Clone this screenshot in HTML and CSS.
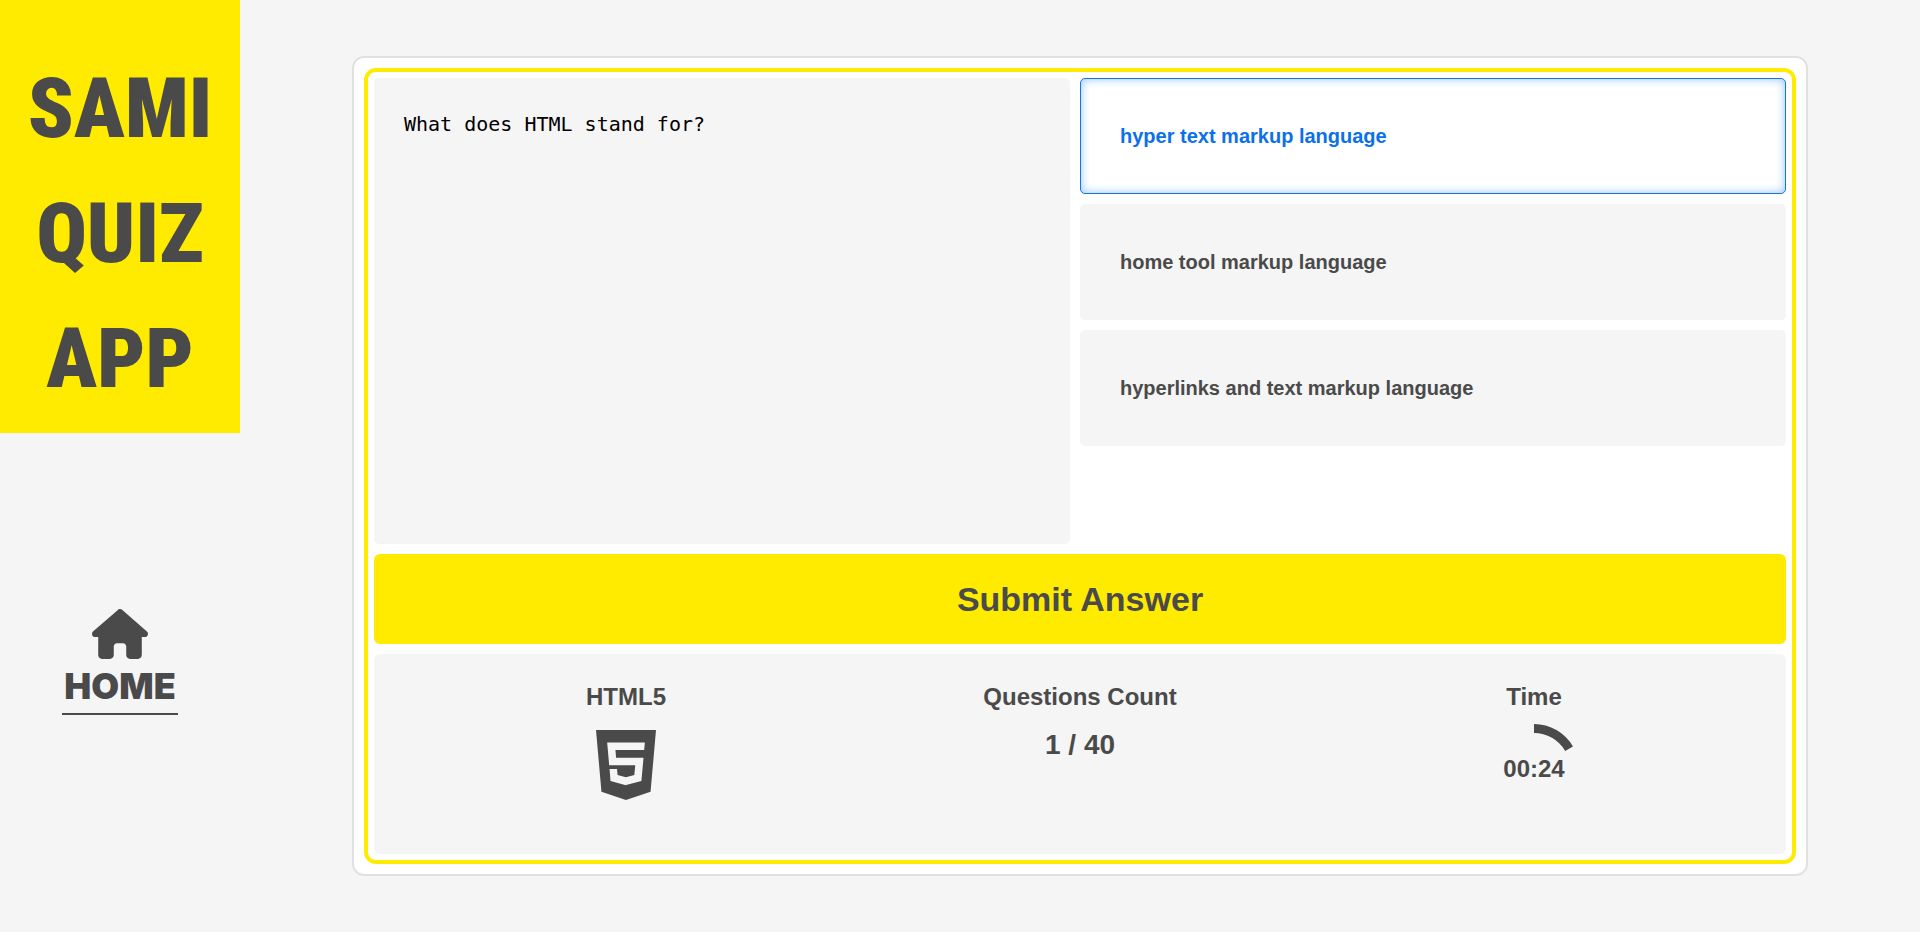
FILE: index.html
```
<!DOCTYPE html>
<html lang="en">
<head>
<meta charset="utf-8">
<title>Sami Quiz App</title>
<meta name="viewport" content="width=device-width, initial-scale=1">
<link rel="stylesheet" href="styles.css">
</head>
<body>
<div class="app">
  <aside class="sidebar">
    <h1 class="brand"><span>SAMI</span><span>QUIZ</span><span>APP</span></h1>
    <nav class="nav">
      <a class="home" href="#">
        <svg class="home-icon" viewBox="0 0 576 512" aria-hidden="true"><path d="M575.8 255.5c0 18-15 32.1-32 32.1h-32l.7 160.2c0 2.7-.2 5.4-.5 8.1V472c0 22.1-17.9 40-40 40H456c-1.1 0-2.2 0-3.3-.1c-1.4 .1-2.8 .1-4.2 .1H416 392c-22.1 0-40-17.9-40-40V448 384c0-17.7-14.3-32-32-32H256c-17.7 0-32 14.3-32 32v64 24c0 22.1-17.9 40-40 40H160 128.1c-1.5 0-3-.1-4.5-.2c-1.2 .1-2.4 .2-3.6 .2H104c-22.1 0-40-17.9-40-40V360c0-.9 0-1.9 .1-2.8V287.6H32c-18 0-32-14-32-32.1c0-9 3-17 10-24L266.4 8c7-7 15-8 22-8s15 2 21 7L564.8 231.5c8 7 12 15 11 24z"/></svg>
        <span class="home-label">HOME</span>
      </a>
    </nav>
  </aside>
  <main class="main">
    <div class="card">
      <form class="quiz">
        <pre class="question" id="question">What does HTML stand for?</pre>
        <div class="options" role="radiogroup" aria-labelledby="question">
          <label class="option"><input class="option-input" type="radio" name="answer" checked>hyper text markup language</label>
          <label class="option"><input class="option-input" type="radio" name="answer">home tool markup language</label>
          <label class="option"><input class="option-input" type="radio" name="answer">hyperlinks and text markup language</label>
        </div>
        <button class="submit" type="submit">Submit Answer</button>
        <div class="stats">
          <section class="stat">
            <h2 class="stat-title">HTML5</h2>
            <svg class="html-icon" viewBox="0 32 384 448" aria-hidden="true"><path d="M0 32l34.900 395.800L191.500 480l157.600-52.200L384 32H0zm308.200 127.900H124.400l4.100 49.400h175.600l-13.600 148.400-97.900 27v.3h-1.100l-98.700-27.300-6-75.800h47.700L138 320l53.500 14.500 53.700-14.500 6-62.200H84.300L71.500 112.200h241.100l-4.400 47.700z"/></svg>
          </section>
          <section class="stat">
            <h2 class="stat-title">Questions Count</h2>
            <p class="count">1 / 40</p>
          </section>
          <section class="stat">
            <h2 class="stat-title">Time</h2>
            <div class="timer">
              <svg class="timer-ring" viewBox="0 0 90 90" aria-hidden="true"><path d="M45 4.500A40.500 40.500 0 0 1 80.070 24.750"/></svg>
              <span class="timer-value">00:24</span>
            </div>
          </section>
        </div>
      </form>
    </div>
  </main>
</div>
</body>
</html>
```
FILE: styles.css
```
* {
  box-sizing: border-box;
}

body {
  margin: 0;
  background: #f5f5f5;
  color: #4a4a4a;
  font-family: "Liberation Sans", Arial, sans-serif;
}

.app {
  display: grid;
  grid-template-columns: 240px 1fr;
  min-height: 100vh;
}

.sidebar {
  display: flex;
  flex-direction: column;
}

.brand {
  display: flex;
  flex-direction: column;
  align-items: center;
  margin: 0;
  padding: 46px 0 12px;
  background: #ffeb00;
  font-family: "Roboto Condensed", "Arial Narrow", "Liberation Sans", sans-serif;
  font-size: 84px;
  font-weight: 900;
  line-height: 125px;
}

.nav {
  display: flex;
  justify-content: center;
  padding-top: 176px;
}

.home {
  display: flex;
  flex-direction: column;
  align-items: center;
  padding: 0 2px;
  border-bottom: 2px solid #4a4a4a;
  color: inherit;
  text-decoration: none;
}

.home-icon {
  width: 56px;
  height: 50px;
  fill: currentColor;
}

.home-label {
  font-family: Inter, "Arial Black", sans-serif;
  font-size: 36px;
  font-weight: 900;
  line-height: 54px;
}

.main {
  display: flex;
  padding: 56px 112px;
}

.card {
  display: flex;
  flex: 1;
  padding: 10px;
  border: 2px solid #e1e1e1;
  border-radius: 12px;
  background: #fff;
}

.quiz {
  display: grid;
  flex: 1;
  grid-template-columns: 69fr 70fr;
  grid-template-rows: 1fr 90px 200px;
  gap: 10px;
  padding: 6px;
  border: 4px solid #ffeb00;
  border-radius: 12px;
}

.question {
  margin: 0;
  padding: 30px;
  border-radius: 5px;
  background: #f5f5f5;
  color: #000;
  font-family: "DejaVu Sans Mono", monospace;
  font-size: 20px;
  line-height: 32px;
}

.options {
  display: flex;
  flex-direction: column;
  gap: 10px;
}

.option {
  display: flex;
  position: relative;
  align-items: center;
  height: 116px;
  padding: 0 39px;
  border: 1px solid #f5f5f5;
  border-radius: 5px;
  background: #f5f5f5;
  font-size: 20px;
  font-weight: 700;
}

.option:has(:checked) {
  border-color: #1a73d9;
  background: #fff;
  box-shadow: inset 0 0 10px #8ec5ff;
  color: #0b70ea;
}

.option-input {
  position: absolute;
  opacity: 0;
}

.submit {
  grid-column: 1 / -1;
  border: 0;
  border-radius: 6px;
  background: #ffeb00;
  color: inherit;
  font-family: inherit;
  font-size: 34px;
  font-weight: 700;
}

.stats {
  display: grid;
  grid-column: 1 / -1;
  grid-template-columns: repeat(3, 1fr);
  padding: 28px 25px;
  border-radius: 6px;
  background: #f5f5f5;
}

.stat {
  display: flex;
  flex-direction: column;
  align-items: center;
}

.stat-title {
  margin: 0;
  font-size: 24px;
  line-height: 30px;
}

.html-icon {
  width: 60px;
  height: 70px;
  margin-top: 18px;
  fill: currentColor;
}

.count {
  margin: 16px 0 0;
  font-size: 28px;
  font-weight: 700;
  line-height: 34px;
}

.timer {
  display: grid;
  place-items: center;
  width: 90px;
  height: 90px;
  margin-top: 12px;
}

.timer-ring,
.timer-value {
  grid-area: 1 / 1;
}

.timer-ring {
  width: 90px;
  height: 90px;
  fill: none;
  stroke: currentColor;
  stroke-width: 9;
}

.timer-value {
  font-size: 24px;
  font-weight: 700;
}
```
